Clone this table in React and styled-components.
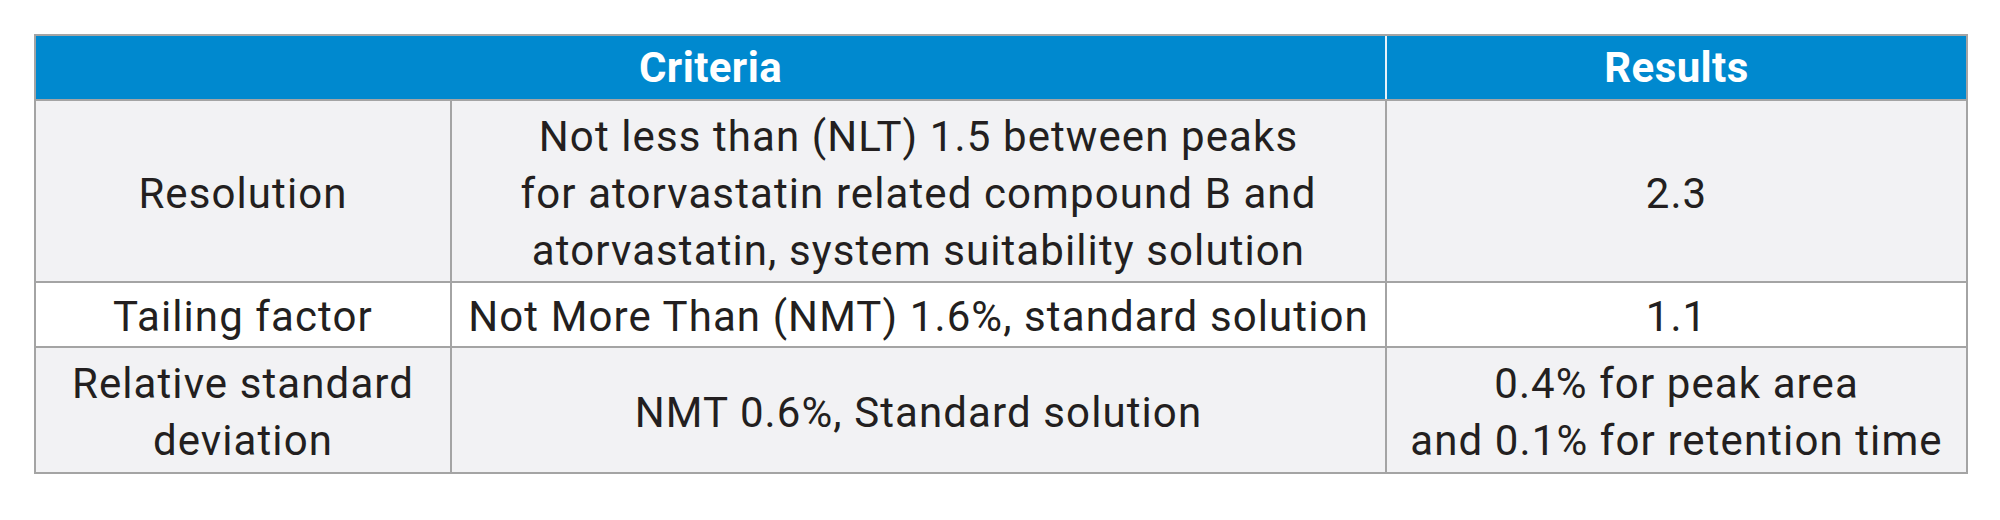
import styled, { createGlobalStyle } from "styled-components";

const GlobalStyle = createGlobalStyle`
  html, body {
    margin: 0;
    padding: 0;
    background: #ffffff;
  }
`;

const Page = styled.div`
  padding: 34px 34px 0 34px;
  font-family: "Roboto", "Liberation Sans", sans-serif;
`;

const Table = styled.table`
  width: 1932px;
  border-collapse: collapse;
  table-layout: fixed;
  border: 2px solid #a4a4a4;
  color: #231f20;
  font-size: 42px;
  letter-spacing: 1.1px;
`;

const HeadCell = styled.th`
  height: 63px;
  padding: 0 12px;
  background: #0089cf;
  color: #ffffff;
  font-weight: 700;
  text-align: center;
  line-height: 57px;
  letter-spacing: 0.4px;
  border-top: 2px solid #a4a4a4;
  border-bottom: 2px solid #a4a4a4;
  border-left: 2px solid #e6f2fa;

  &:first-child {
    border-left: 2px solid #a4a4a4;
  }
`;

const Row = styled.tr`
  background: ${(p) => (p.$shaded ? "#f2f2f4" : "#ffffff")};
  height: ${(p) => p.$height}px;
`;

const Cell = styled.td`
  padding: 4px 12px 0 12px;
  text-align: center;
  vertical-align: middle;
  line-height: 57px;
  border: 2px solid #a4a4a4;
  font-weight: 400;
`;

const rows = [
  {
    criterion: ["Resolution"],
    requirement: [
      "Not less than (NLT) 1.5 between peaks",
      "for atorvastatin related compound B and",
      "atorvastatin, system suitability solution",
    ],
    result: ["2.3"],
    height: 182,
    shaded: true,
  },
  {
    criterion: ["Tailing factor"],
    requirement: ["Not More Than (NMT) 1.6%, standard solution"],
    result: ["1.1"],
    height: 65,
    shaded: false,
  },
  {
    criterion: ["Relative standard", "deviation"],
    requirement: ["NMT 0.6%, Standard solution"],
    result: ["0.4% for peak area", "and 0.1% for retention time"],
    height: 126,
    shaded: true,
  },
];

function Lines({ lines }) {
  return lines.map((line, i) => (
    <span key={i}>
      {line}
      {i < lines.length - 1 && <br />}
    </span>
  ));
}

export default function App() {
  return (
    <>
      <GlobalStyle />
      <Page>
        <Table>
          <colgroup>
            <col style={{ width: 416 }} />
            <col style={{ width: 935 }} />
            <col style={{ width: 581 }} />
          </colgroup>
          <thead>
            <tr>
              <HeadCell colSpan={2}>Criteria</HeadCell>
              <HeadCell>Results</HeadCell>
            </tr>
          </thead>
          <tbody>
            {rows.map((r) => (
              <Row key={r.criterion[0]} $shaded={r.shaded} $height={r.height}>
                <Cell>
                  <Lines lines={r.criterion} />
                </Cell>
                <Cell>
                  <Lines lines={r.requirement} />
                </Cell>
                <Cell>
                  <Lines lines={r.result} />
                </Cell>
              </Row>
            ))}
          </tbody>
        </Table>
      </Page>
    </>
  );
}
